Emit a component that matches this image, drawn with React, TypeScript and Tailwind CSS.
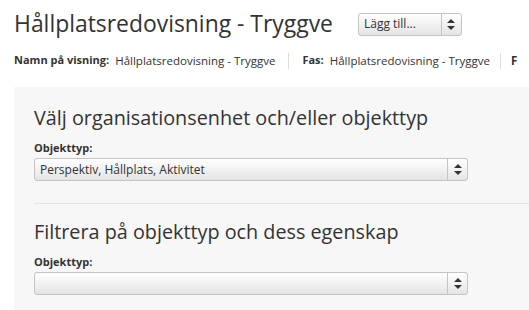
const font = { fontFamily: '"Open Sans", "Liberation Sans", sans-serif' };

const Arrows = () => (
  <svg width="8" height="11" viewBox="0 0 8 11" className="fill-[#333]">
    <path d="M4 0L8 4H0Z" />
    <path d="M0 7H8L4 11Z" />
  </svg>
);

const FakeSelect = ({ value, className }: { value?: string; className: string }) => (
  <div
    className={`flex h-[23px] items-stretch rounded-[3px] border border-[#c4c4c4] bg-gradient-to-b from-white to-[#e4e4e4] ${className}`}
  >
    <div className="flex flex-1 items-center truncate pl-[5px] text-[12px] text-[#333]">{value}</div>
    <div className="flex w-[20px] items-center justify-center border-l border-[#c4c4c4]">
      <Arrows />
    </div>
  </div>
);

const Section = ({ title, value, className }: { title: string; value?: string; className: string }) => (
  <div className={className}>
    <h2 className="text-[19.8px] leading-[26px] text-[#333]">{title}</h2>
    <div className="mt-[10px] text-[11px] font-bold leading-[14px] text-[#333]">Objekttyp:</div>
    <FakeSelect value={value} className="mt-[3px] w-[434px]" />
  </div>
);

export default function App() {
  return (
    <div className="h-[310px] w-[529px] overflow-hidden bg-white" style={font}>
      <div className="px-[14px] pt-[8px]">
        <div className="flex items-center">
          <h1 className="whitespace-nowrap text-[22.9px] leading-[32px] text-[#333]">Hållplatsredovisning - Tryggve</h1>
          <FakeSelect value="Lägg till..." className="ml-[25px] w-[104px] shrink-0" />
        </div>
        <div className="mt-[12px] flex items-center whitespace-nowrap text-[11.5px] text-[#333]">
          <span className="text-[11px] font-bold">Namn på visning:</span>
          <span className="ml-[6px]">Hållplatsredovisning - Tryggve</span>
          <span className="mx-[13px] h-[16px] border-l border-[#ddd]" />
          <span className="text-[11px] font-bold">Fas:</span>
          <span className="ml-[6px]">Hållplatsredovisning - Tryggve</span>
          <span className="mx-[10px] h-[16px] border-l border-[#ddd]" />
          <span className="font-bold">F</span>
        </div>
      </div>
      <div className="ml-[14px] mt-[18px] h-[300px] bg-[#f7f7f7] pl-[20px]">
        <Section
          className="pt-[18px]"
          title="Välj organisationsenhet och/eller objekttyp"
          value="Perspektiv, Hållplats, Aktivitet"
        />
        <div className="mt-[22px] border-t border-[#e3e3e3]" />
        <Section className="pt-[15px]" title="Filtrera på objekttyp och dess egenskap" />
      </div>
    </div>
  );
}
